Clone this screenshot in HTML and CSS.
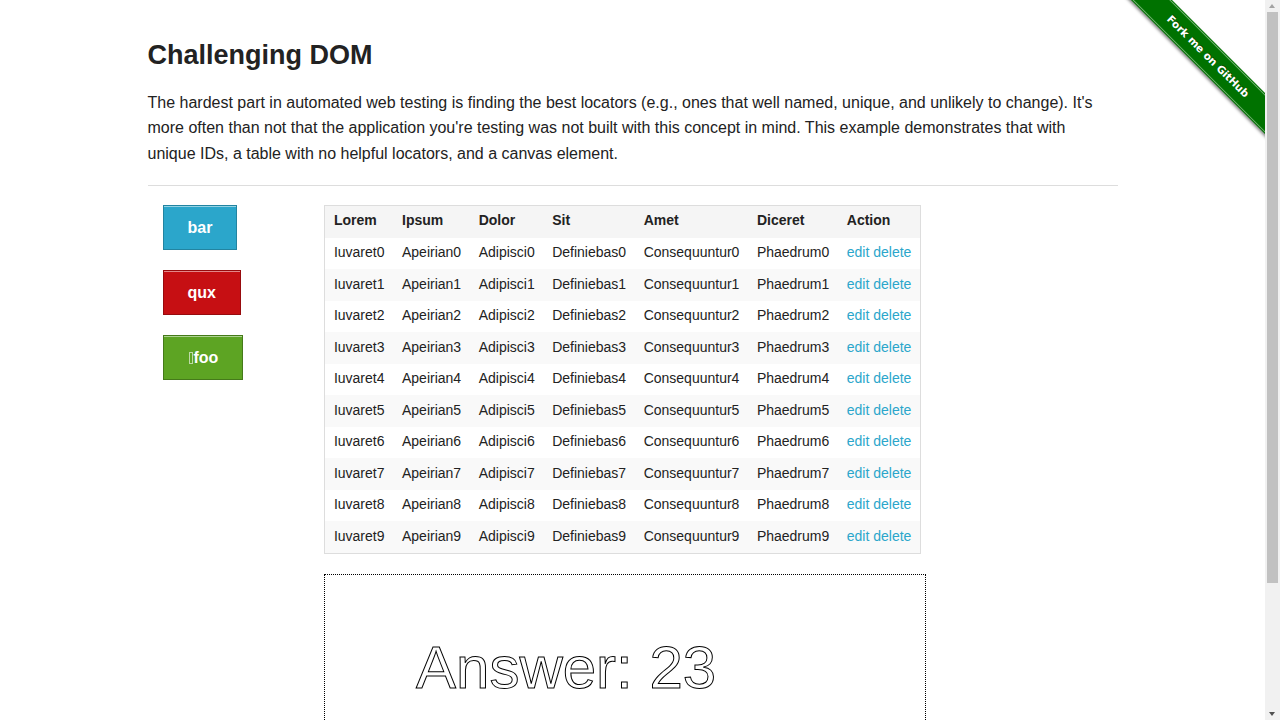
FILE: index.html
```html
<!DOCTYPE html>
<html lang="en">
<head>
<meta charset="utf-8">
<title>The Internet</title>
<link rel="stylesheet" href="styles.css">
</head>
<body>
<div class="ribbon-wrap"><a class="ribbon" href="#">Fork me on GitHub</a></div>
<div class="row">
  <div class="content">
    <h3 class="title">Challenging DOM</h3>
    <p class="lead">The hardest part in automated web testing is finding the best locators (e.g., ones that well named, unique, and unlikely to change). It's more often than not that the application you're testing was not built with this concept in mind. This example demonstrates that with unique IDs, a table with no helpful locators, and a canvas element.</p>
    <hr class="rule">
    <div class="split">
      <div class="side">
        <a class="button" href="#">bar</a>
        <a class="button alert" href="#">qux</a>
        <a class="button success" href="#"><span class="tofu"></span>foo</a>
      </div>
      <div class="main">
        <table class="grid">
          <thead>
            <tr><th>Lorem</th><th>Ipsum</th><th>Dolor</th><th>Sit</th><th>Amet</th><th>Diceret</th><th>Action</th></tr>
          </thead>
          <tbody>
            <tr><td>Iuvaret0</td><td>Apeirian0</td><td>Adipisci0</td><td>Definiebas0</td><td>Consequuntur0</td><td>Phaedrum0</td><td><a href="#">edit</a> <a href="#">delete</a></td></tr>
            <tr><td>Iuvaret1</td><td>Apeirian1</td><td>Adipisci1</td><td>Definiebas1</td><td>Consequuntur1</td><td>Phaedrum1</td><td><a href="#">edit</a> <a href="#">delete</a></td></tr>
            <tr><td>Iuvaret2</td><td>Apeirian2</td><td>Adipisci2</td><td>Definiebas2</td><td>Consequuntur2</td><td>Phaedrum2</td><td><a href="#">edit</a> <a href="#">delete</a></td></tr>
            <tr><td>Iuvaret3</td><td>Apeirian3</td><td>Adipisci3</td><td>Definiebas3</td><td>Consequuntur3</td><td>Phaedrum3</td><td><a href="#">edit</a> <a href="#">delete</a></td></tr>
            <tr><td>Iuvaret4</td><td>Apeirian4</td><td>Adipisci4</td><td>Definiebas4</td><td>Consequuntur4</td><td>Phaedrum4</td><td><a href="#">edit</a> <a href="#">delete</a></td></tr>
            <tr><td>Iuvaret5</td><td>Apeirian5</td><td>Adipisci5</td><td>Definiebas5</td><td>Consequuntur5</td><td>Phaedrum5</td><td><a href="#">edit</a> <a href="#">delete</a></td></tr>
            <tr><td>Iuvaret6</td><td>Apeirian6</td><td>Adipisci6</td><td>Definiebas6</td><td>Consequuntur6</td><td>Phaedrum6</td><td><a href="#">edit</a> <a href="#">delete</a></td></tr>
            <tr><td>Iuvaret7</td><td>Apeirian7</td><td>Adipisci7</td><td>Definiebas7</td><td>Consequuntur7</td><td>Phaedrum7</td><td><a href="#">edit</a> <a href="#">delete</a></td></tr>
            <tr><td>Iuvaret8</td><td>Apeirian8</td><td>Adipisci8</td><td>Definiebas8</td><td>Consequuntur8</td><td>Phaedrum8</td><td><a href="#">edit</a> <a href="#">delete</a></td></tr>
            <tr><td>Iuvaret9</td><td>Apeirian9</td><td>Adipisci9</td><td>Definiebas9</td><td>Consequuntur9</td><td>Phaedrum9</td><td><a href="#">edit</a> <a href="#">delete</a></td></tr>
          </tbody>
        </table>
        <div class="canvas">
          <svg class="canvas-art" width="600" height="300" viewBox="0 0 600 300">
            <text x="91" y="113" font-family="Liberation Sans, Arial, sans-serif" font-size="60" fill="none" stroke="#000" stroke-width="1">Answer: 23</text>
          </svg>
        </div>
      </div>
    </div>
  </div>
</div>
<div class="scrollbar" aria-hidden="true">
  <div class="sb-arrow sb-up"></div>
  <div class="sb-thumb"></div>
  <div class="sb-rest"></div>
  <div class="sb-arrow sb-down"></div>
</div>
</body>
</html>
```
FILE: styles.css
```css
html, body {
  margin: 0;
  padding: 0;
}
body {
  font-family: "Liberation Sans", Arial, Helvetica, sans-serif;
  color: #222;
  background: #fff;
  font-size: 16px;
  position: relative;
  margin-right: 15px;
}
a {
  color: #2ba6cb;
  text-decoration: none;
}

.ribbon-wrap {
  position: absolute;
  top: 0;
  right: 0;
  width: 149px;
  height: 149px;
  overflow: hidden;
}
.ribbon {
  position: absolute;
  left: -13px;
  top: 42px;
  width: 210px;
  height: 29px;
  line-height: 29px;
  transform: rotate(45deg);
  background: #007200;
  color: #fff;
  font-family: "DejaVu Sans", "Liberation Sans", sans-serif;
  font-weight: bold;
  font-size: 10.5px;
  text-align: center;
  text-shadow: 0 -1px 0 rgba(0,0,0,.4);
  box-shadow: 0 2px 3px rgba(0,0,0,.45);
}
.ribbon::before {
  content: "";
  position: absolute;
  left: 0;
  right: 0;
  top: 1px;
  bottom: 1px;
  border-top: 1px solid rgba(255,255,255,.45);
  border-bottom: 1px solid rgba(255,255,255,.45);
}

.row {
  max-width: 1000px;
  margin: 0 auto;
}
.content {
  padding: 39px 15px 2px;
}
.title {
  margin: 0 0 17px;
  font-size: 27px;
  line-height: 33.75px;
  font-weight: bold;
  color: #222;
}
.lead {
  margin: 0 0 18.5px;
  font-size: 16px;
  line-height: 25.6px;
}
.rule {
  border: 0;
  border-top: 1px solid #ddd;
  margin: 0 0 19px;
  height: 0;
}

.split {
  display: flex;
}
.side {
  flex: 0 0 16.6667%;
  box-sizing: border-box;
  padding: 0 15px;
  display: flex;
  flex-direction: column;
  align-items: flex-start;
  gap: 20px;
}
.main {
  flex: 0 0 83.3333%;
  box-sizing: border-box;
  padding: 0 15px;
}

.button {
  display: inline-block;
  padding: 13px 24px 12px;
  font-size: 16px;
  line-height: 18px;
  font-weight: bold;
  color: #fff;
  background: #2ba6cb;
  border: 1px solid #2284a1;
  box-shadow: inset 0 1px 0 rgba(255,255,255,.5);
}
.button.alert {
  background: #c60f13;
  border-color: #970b0e;
}
.button.success {
  background: #5da423;
  border-color: #457a1a;
}
.tofu {
  display: inline-block;
  box-sizing: content-box;
  width: 2px;
  height: 10px;
  border: 1px solid rgba(255,255,255,.6);
  vertical-align: -1px;
  margin: 0 1px;
}

.grid {
  border-collapse: separate;
  border-spacing: 0;
  border: 1px solid #ddd;
  margin: 0 0 20px;
  font-size: 14px;
}
.grid th {
  background: #f5f5f5;
  text-align: left;
  font-weight: bold;
  color: #222;
  padding: 7px 8.75px 8.75px;
  line-height: 15.75px;
}
.grid td {
  padding: 7.875px 8.75px;
  line-height: 15.75px;
  color: #222;
}
.grid tbody tr:nth-of-type(even) {
  background: #f9f9f9;
}
.grid td a {
  color: #2ba6cb;
}

.canvas {
  width: 600px;
  height: 300px;
  border: 1px dotted #000;
}
.canvas-art {
  display: block;
}

.scrollbar {
  position: fixed;
  top: 0;
  right: 0;
  width: 15px;
  height: 100vh;
  background: #f1f1f1;
  display: flex;
  flex-direction: column;
  align-items: center;
}
.sb-arrow {
  flex: 0 0 12px;
  width: 15px;
  position: relative;
}
.sb-arrow::after {
  content: "";
  position: absolute;
  left: 4px;
  border-left: 3.5px solid transparent;
  border-right: 3.5px solid transparent;
}
.sb-up::after {
  top: 4px;
  border-bottom: 4px solid #a3a3a3;
}
.sb-down::after {
  top: 4px;
  border-top: 4px solid #505050;
}
.sb-thumb {
  flex: 0 0 571px;
  width: 11px;
  background: #c1c1c1;
}
.sb-rest {
  flex: 1 1 auto;
}
```
